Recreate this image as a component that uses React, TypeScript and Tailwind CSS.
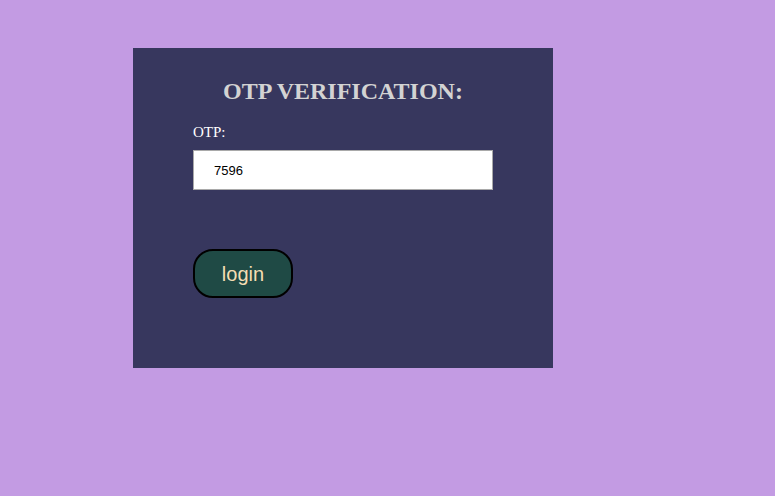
import React from 'react';

export default function App() {
  return (
    <div className="w-[775px] h-[496px] bg-[#c39be3] pt-12 pl-[133px] font-['Liberation_Serif',serif]">
      <div className="w-[420px] h-[320px] bg-[#37375e] pt-[28px] px-[60px]">
        <h2 className="text-center text-[24px] font-bold leading-[30px] text-[#d3d3d3]">OTP VERIFICATION:</h2>
        <label className="block mt-[17px] text-[15px] leading-[18px] text-white">OTP:</label>
        <input
          type="text"
          defaultValue="7596"
          className="mt-[9px] block w-[300px] h-[40px] bg-white border border-[#a9a9a9] pl-[20px] text-[13px] text-black font-['Liberation_Sans',sans-serif] outline-none"
        />
        <button className="mt-[59px] w-[100px] h-[49px] rounded-[20px] border-2 border-black bg-[#1f4a45] text-[20px] text-[#f5deb3] font-['Liberation_Sans',sans-serif]">
          login
        </button>
      </div>
    </div>
  );
}
